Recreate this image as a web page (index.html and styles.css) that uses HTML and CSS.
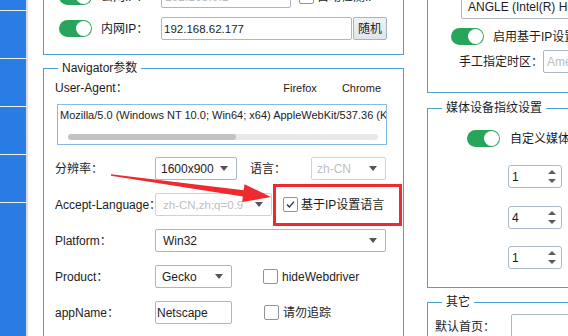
FILE: index.html
```html
<!DOCTYPE html>
<html lang="zh">
<head>
<meta charset="utf-8">
<title>Navigator</title>
<link rel="stylesheet" href="styles.css">
</head>
<body>
<div class="app">
  <aside class="sidebar">
    <div class="s-item"></div>
    <div class="s-item"></div>
    <div class="s-item"></div>
    <div class="s-item"></div>
    <div class="s-item"></div>
  </aside>

  <main class="main">
    <div class="col col-left">
      <section class="panel panel-top">
        <div class="irow">
          <span class="toggle"><span class="knob"></span></span>
          <span class="ilabel">公网IP：</span>
          <span class="field field-pub">192.168.0.1</span>
          <span class="check checked check-auto"><svg viewBox="0 0 15 15"><path d="M3.5 7.5 L6.2 10.3 L11.5 4.2" fill="none" stroke="#333" stroke-width="1.6"/></svg></span>
          <span class="ctext">自动检测IP</span>
        </div>
        <div class="irow">
          <span class="toggle"><span class="knob"></span></span>
          <span class="ilabel">内网IP：</span>
          <span class="field field-lan">192.168.62.177</span>
          <span class="btn">随机</span>
        </div>
      </section>

      <fieldset class="group group-nav">
        <legend>Navigator参数</legend>
        <div class="ua-head">
          <span>User-Agent：</span>
          <span class="browsers"><span>Firefox</span><span>Chrome</span></span>
        </div>
        <div class="ua-box">
          <div class="ua-text">Mozilla/5.0 (Windows NT 10.0; Win64; x64) AppleWebKit/537.36 (KHTML, like Gecko) Chrome/96.0</div>
          <div class="hscroll"><div class="thumb"></div></div>
        </div>
        <div class="form">
          <span class="flabel">分辨率：</span>
          <div class="fctl">
            <span class="select w82">1600x900</span>
            <span class="flabel lang">语言：</span>
            <span class="select w75 disabled">zh-CN</span>
          </div>

          <span class="flabel">Accept-Language：</span>
          <div class="fctl">
            <span class="select w117 disabled">zh-CN,zh;q=0.9</span>
            <span class="check checked cb-lang"><svg viewBox="0 0 15 15"><path d="M3.5 7.5 L6.2 10.3 L11.5 4.2" fill="none" stroke="#333" stroke-width="1.6"/></svg></span>
            <span class="ctext">基于IP设置语言</span>
          </div>

          <span class="flabel">Platform：</span>
          <div class="fctl">
            <span class="select w231">Win32</span>
          </div>

          <span class="flabel">Product：</span>
          <div class="fctl">
            <span class="select w77">Gecko</span>
            <span class="check cb-far"></span>
            <span class="ctext">hideWebdriver</span>
          </div>

          <span class="flabel">appName：</span>
          <div class="fctl">
            <span class="field w77 field-app">Netscape</span>
            <span class="check cb-far2"></span>
            <span class="ctext">请勿追踪</span>
          </div>
        </div>
      </fieldset>
    </div>

    <div class="col col-right">
      <section class="panel box-top">
        <span class="select angle">ANGLE (Intel(R) HD Graphics 620 Direct3D11 vs_5_0 ps_5_0)</span>
        <div class="trow">
          <span class="toggle"><span class="knob"></span></span>
          <span class="ttext">启用基于IP设置时区</span>
        </div>
        <div class="tzrow">
          <span class="tzlabel">手工指定时区：</span>
          <span class="field tz">America/New_York</span>
        </div>
      </section>

      <fieldset class="group group-media">
        <legend>媒体设备指纹设置</legend>
        <div class="trow media-toggle">
          <span class="toggle"><span class="knob"></span></span>
          <span class="ttext">自定义媒体设备</span>
        </div>
        <div class="spin s1"><span class="val">1</span><span class="arrows"><i class="up"></i><i class="down"></i></span></div>
        <div class="spin s2"><span class="val">4</span><span class="arrows"><i class="up"></i><i class="down"></i></span></div>
        <div class="spin s3"><span class="val">1</span><span class="arrows"><i class="up"></i><i class="down"></i></span></div>
      </fieldset>

      <fieldset class="group group-other">
        <legend>其它</legend>
        <div class="home-row">
          <span class="home-label">默认首页：</span>
          <span class="field home"></span>
        </div>
      </fieldset>
    </div>
  </main>

  <div class="annot-box"></div>
  <svg class="annot-arrow" viewBox="0 0 568 336" width="568" height="336">
    <polygon points="111,174.3 243.7,190.2 244.5,184.3 271,197 242.1,202.1 242.9,196.4 110.9,175.7" fill="#ee2a2e"/>
  </svg>
</div>
</body>
</html>
```

FILE: styles.css
```css
* { box-sizing: border-box; }
html, body { margin: 0; padding: 0; }
body {
  width: 568px;
  height: 336px;
  overflow: hidden;
  background: #fff;
  font-family: "Liberation Sans", "Noto Sans CJK SC", sans-serif;
  font-size: 12px;
  line-height: 16px;
  color: #1c1c24;
}
.app { position: relative; display: flex; height: 336px; }

/* sidebar */
.sidebar {
  width: 28px;
  flex: none;
  background: linear-gradient(180deg, #2b7de6 0%, #2a7ce4 100%);
  border-right: 2px solid #d9dde3;
  padding-top: 10px;
  display: flex;
  flex-direction: column;
}
.s-item { height: 48px; border-top: 1px solid rgba(255,255,255,0.9); }

/* main */
.main {
  flex: 1;
  min-width: 0;
  display: flex;
  align-items: flex-start;
  gap: 23px;
  padding-left: 15px;
}
.col { flex: none; margin-top: -24px; }
.col-left { width: 361px; }
.col-right { width: 200px; }

.panel { border: 1px solid #4b9fd3; border-top: 0; }
.panel-top {
  padding: 9px 0 14px 15px;
  display: flex;
  flex-direction: column;
  gap: 9px;
}
.irow { display: flex; align-items: center; height: 23px; }

.toggle {
  width: 33px;
  height: 17px;
  flex: none;
  border-radius: 9px;
  background: #29a55b;
  display: flex;
  justify-content: flex-end;
  align-items: center;
  padding: 0 1px;
}
.knob { width: 15px; height: 15px; border-radius: 50%; background: #fff; }

.ilabel { width: 60px; margin-left: 9px; }
.field {
  height: 23px;
  border: 1px solid #abb7c4;
  border-radius: 2px;
  background: #fff;
  display: flex;
  align-items: center;
  padding-left: 3px;
  white-space: nowrap;
  overflow: hidden;
  flex: none;
}
.field-pub { width: 130px; color: #b8bdc3; }
.field-lan { width: 191px; padding-left: 2px; font-size: 11.5px; }
.btn {
  width: 34px;
  height: 23px;
  margin-left: 1px;
  border: 1px solid #a7b3bf;
  border-radius: 2px;
  background: linear-gradient(180deg, #eef2f6, #dde5ed);
  display: flex;
  align-items: center;
  justify-content: center;
}

.check {
  width: 15px;
  height: 15px;
  flex: none;
  border: 1px solid #949494;
  border-radius: 2px;
  background: #fff;
  display: flex;
}
.check svg { width: 13px; height: 13px; }
.check-auto { margin-left: 8px; }
.ctext { margin-left: 3px; white-space: nowrap; }

/* group boxes */
.group {
  margin: 5px 0 0;
  border: 1px solid #4b9fd3;
  min-width: 0;
}
.group legend { padding: 0 4px; margin-left: 3px; line-height: 16px; }
.group-nav { padding: 4px 16px 40px 11px; }

.ua-head { display: flex; height: 16px; align-items: center; }
.browsers { margin-left: auto; display: flex; gap: 25px; padding-right: 6px; font-size: 11px; }

.ua-box {
  margin: 8px 0 0 2px;
  height: 41px;
  border: 1px solid #86bbe9;
  padding: 2px 0 0 2px;
}
.ua-text { white-space: nowrap; overflow: hidden; font-size: 11px; }
.hscroll {
  margin: 11px 0 0 8px;
  width: 310px;
  height: 6px;
  border-radius: 3px;
  background: #e8e8e8;
}
.thumb { width: 168px; height: 6px; border-radius: 3px; background: #c3c3c3; }

.form {
  display: grid;
  grid-template-columns: 100px auto;
  grid-auto-rows: 23px;
  row-gap: 13px;
  margin-top: 12px;
  align-items: center;
}
.flabel { white-space: nowrap; }
.fctl { display: flex; align-items: center; height: 23px; }

.select {
  height: 23px;
  flex: none;
  border: 1px solid #adb6bf;
  border-radius: 2px;
  background: #fff;
  display: flex;
  align-items: center;
  padding: 0 8px 0 5px;
  white-space: nowrap;
  overflow: hidden;
}
.select::after {
  content: "";
  margin-left: auto;
  flex: none;
  border-left: 4px solid transparent;
  border-right: 4px solid transparent;
  border-top: 5px solid #555;
}
.select.disabled { color: #c0c0c0; border-color: #cdd3da; }
.w82 { width: 82px; }
.w75 { width: 75px; }
.w117 { width: 117px; padding-left: 7px; font-size: 11.5px; }
.w231 { width: 231px; padding-left: 7px; }
.w77 { width: 77px; padding-left: 6px; }
.field-app { padding-left: 1px; }
.lang { width: 61px; margin-left: 13px; }
.cb-lang { margin-left: 11px; }
.cb-far { margin-left: 31px; }
.cb-far2 { margin-left: 32px; }
.cb-far + .ctext, .cb-far2 + .ctext { margin-left: 4px; }

/* right column */
.box-top { padding: 19px 0 19px 0; }
.angle { width: 166px; margin-left: 33px; height: 24px; padding-left: 6px; }
.angle::after { display: none; }
.trow { display: flex; align-items: center; height: 17px; margin-top: 9px; margin-left: 23px; }
.ttext { margin-left: 9px; white-space: nowrap; }
.tzrow { display: flex; align-items: center; height: 23px; margin-top: 5px; padding-left: 31px; }
.tzlabel { width: 92px; white-space: nowrap; }
.tz { width: 120px; color: #b9bec4; }

.group-media { margin-top: 7px; padding: 0 0 18px 11px; }
.media-toggle { margin-top: 14px; margin-left: 28px; }
.media-toggle .ttext { margin-left: 10px; }
.spin {
  margin-left: 69px;
  width: 54px;
  height: 23px;
  border: 1px solid #a9b9c9;
  border-radius: 3px;
  display: flex;
  align-items: center;
  padding: 0 5px 0 3px;
  background: #fff;
}
.s1 { margin-top: 18px; }
.s2 { margin-top: 18px; }
.s3 { margin-top: 17px; }
.spin .val { flex: 1; }
.arrows { display: flex; flex-direction: column; gap: 5px; }
.arrows i { display: block; width: 0; height: 0; border-left: 4px solid transparent; border-right: 4px solid transparent; }
.arrows .up { border-bottom: 4px solid #5a5a5a; }
.arrows .down { border-top: 4px solid #5a5a5a; }

.group-other { margin-top: 6px; padding: 4px 0 10px 7px; }
.group-other legend { margin-left: 7px; }
.home-row { display: flex; align-items: center; height: 26px; }
.home-label { width: 76px; white-space: nowrap; }
.home { width: 110px; height: 26px; }

/* annotations */
.annot-box {
  position: absolute;
  left: 273px;
  top: 184px;
  width: 129px;
  height: 42px;
  border: 3px solid #ee2a2e;
}
.annot-arrow { position: absolute; left: 0; top: 0; pointer-events: none; }
```
